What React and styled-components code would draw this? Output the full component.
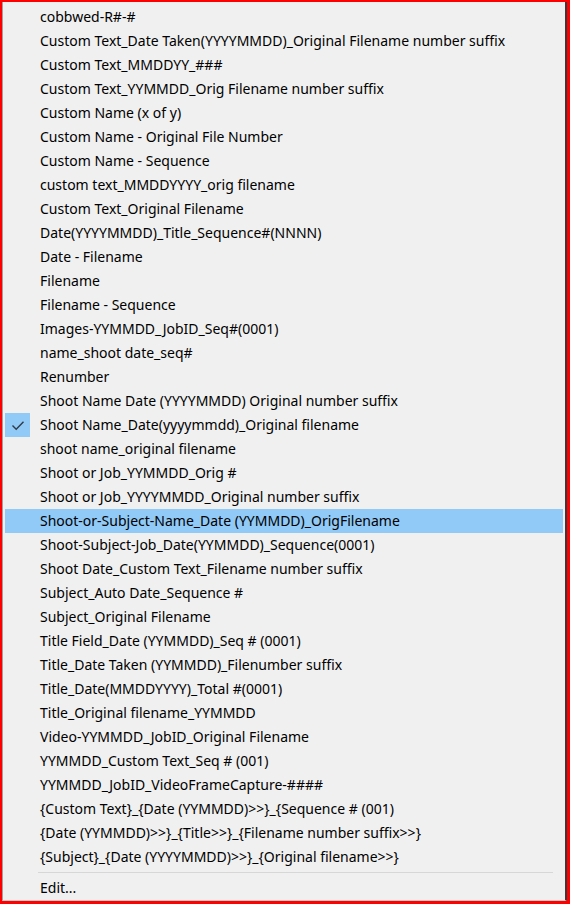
import React from "react";
import styled, { createGlobalStyle } from "styled-components";

const GlobalStyle = createGlobalStyle`
  html, body {
    margin: 0;
    padding: 0;
    background: #f00;
  }
  #root {
    width: 570px;
    height: 904px;
  }
`;

const presets = [
  "cobbwed-R#-#",
  "Custom Text_Date Taken(YYYYMMDD)_Original Filename number suffix",
  "Custom Text_MMDDYY_###",
  "Custom Text_YYMMDD_Orig Filename number suffix",
  "Custom Name (x of y)",
  "Custom Name - Original File Number",
  "Custom Name - Sequence",
  "custom text_MMDDYYYY_orig filename",
  "Custom Text_Original Filename",
  "Date(YYYYMMDD)_Title_Sequence#(NNNN)",
  "Date - Filename",
  "Filename",
  "Filename - Sequence",
  "Images-YYMMDD_JobID_Seq#(0001)",
  "name_shoot date_seq#",
  "Renumber",
  "Shoot Name Date (YYYYMMDD) Original number suffix",
  "Shoot Name_Date(yyyymmdd)_Original filename",
  "shoot name_original filename",
  "Shoot or Job_YYMMDD_Orig #",
  "Shoot or Job_YYYYMMDD_Original number suffix",
  "Shoot-or-Subject-Name_Date (YYMMDD)_OrigFilename",
  "Shoot-Subject-Job_Date(YYMMDD)_Sequence(0001)",
  "Shoot Date_Custom Text_Filename number suffix",
  "Subject_Auto Date_Sequence #",
  "Subject_Original Filename",
  "Title Field_Date (YYMMDD)_Seq # (0001)",
  "Title_Date Taken (YYMMDD)_Filenumber suffix",
  "Title_Date(MMDDYYYY)_Total #(0001)",
  "Title_Original filename_YYMMDD",
  "Video-YYMMDD_JobID_Original Filename",
  "YYMMDD_Custom Text_Seq # (001)",
  "YYMMDD_JobID_VideoFrameCapture-####",
  "{Custom Text}_{Date (YYMMDD)>>}_{Sequence # (001)",
  "{Date (YYMMDD)>>}_{Title>>}_{Filename number suffix>>}",
  "{Subject}_{Date (YYYYMMDD)>>}_{Original filename>>}",
];

const CHECKED = 17;
const HOVERED = 21;

const Frame = styled.div`
  box-sizing: border-box;
  width: 570px;
  height: 904px;
  padding: 2px 3px 3px 2px;
  background: #f00;
`;

const Menu = styled.div`
  box-sizing: border-box;
  height: 100%;
  display: flex;
  flex-direction: column;
  padding: 3px 2px 1px 2px;
  background: #f0f0f0;
  border-left: 1px solid #a0a0a0;
  border-bottom: 1px solid #c8c8c8;
  border-right: 2px solid #3a3a3a;
  font-family: "Noto Sans", "Open Sans", sans-serif;
  font-size: 14px;
  color: #000;
`;

const Item = styled.div`
  display: flex;
  align-items: center;
  height: 24px;
  flex-shrink: 0;
  background: ${({ active }) => (active ? "#91c9f7" : "transparent")};
`;

const CheckSlot = styled.div`
  width: 25px;
  height: 24px;
  flex-shrink: 0;
  display: flex;
  align-items: center;
  justify-content: center;
  background: ${({ checked }) => (checked ? "#91c9f7" : "transparent")};
`;

const Label = styled.span`
  margin-left: 10px;
  white-space: nowrap;
  line-height: 24px;
`;

const Separator = styled.div`
  height: 1px;
  margin: 3px 10px 3px 33px;
  background: #d7d7d7;
  flex-shrink: 0;
`;

function CheckMark() {
  return (
    <svg width="16" height="16" viewBox="0 0 16 16">
      <path
        d="M2.5 8.5 L6.2 12.2 L13.5 4.8"
        fill="none"
        stroke="#2f3b48"
        strokeWidth="1.4"
      />
    </svg>
  );
}

function MenuItem({ label, checked, active }) {
  return (
    <Item active={active}>
      <CheckSlot checked={checked}>{checked && <CheckMark />}</CheckSlot>
      <Label>{label}</Label>
    </Item>
  );
}

export default function App() {
  return (
    <Frame>
      <GlobalStyle />
      <Menu>
        {presets.map((name, i) => (
          <MenuItem
            key={name}
            label={name}
            checked={i === CHECKED}
            active={i === HOVERED}
          />
        ))}
        <Separator />
        <MenuItem label="Edit..." />
      </Menu>
    </Frame>
  );
}
